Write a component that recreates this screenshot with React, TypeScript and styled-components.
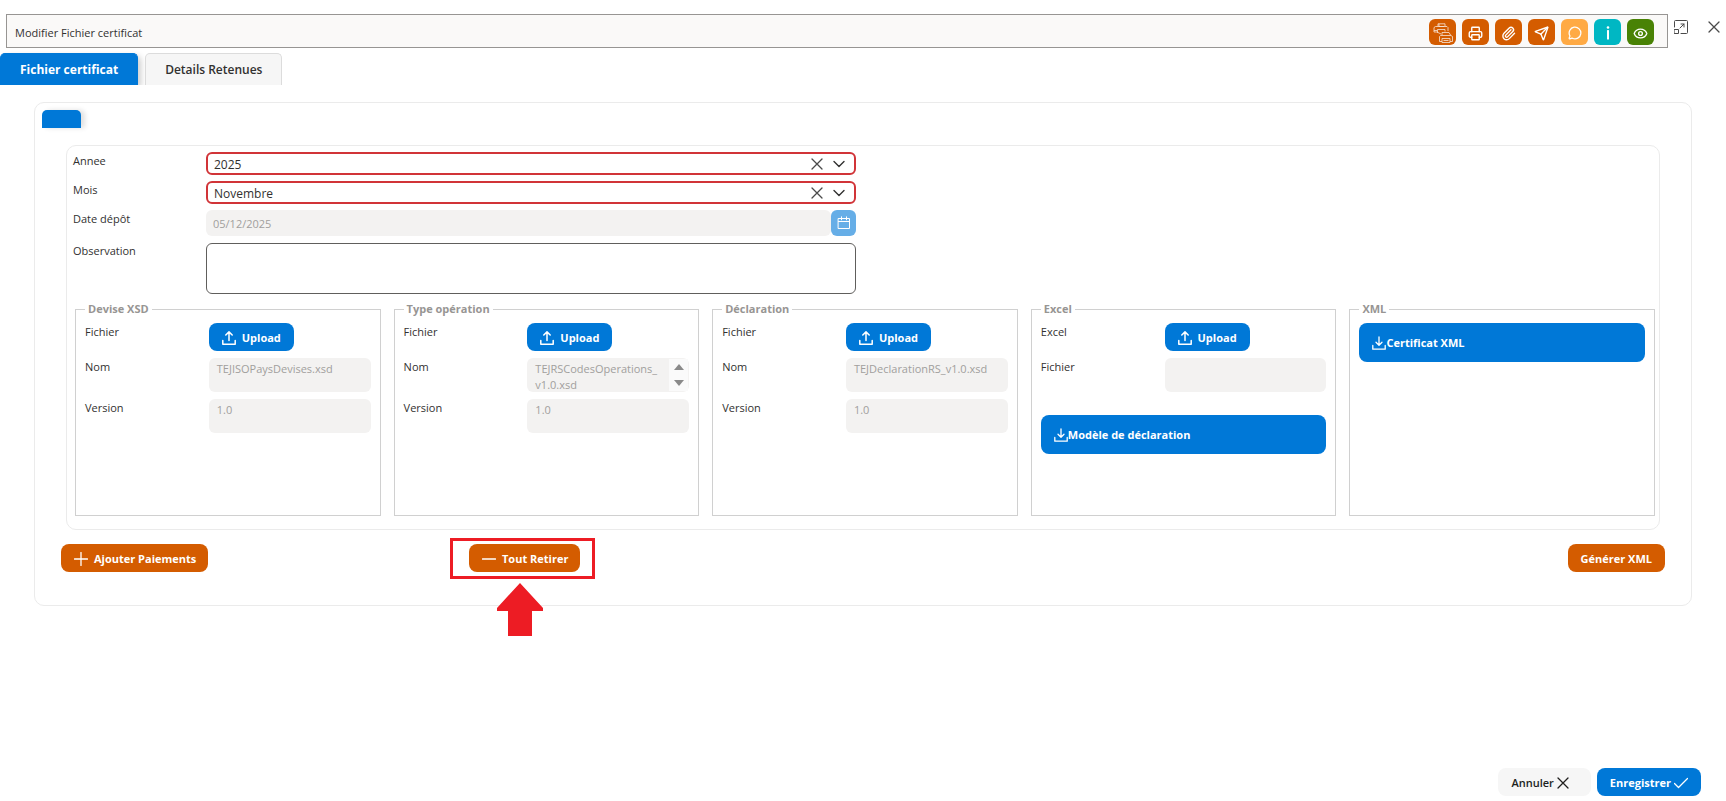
import React, { useId } from 'react';
import styled, { createGlobalStyle, css } from 'styled-components';
import { Eye, MessageCircle, Paperclip, Printer, Send } from 'lucide-react';

const blue = '#0078d7';
const orange = '#d45c00';
const red = '#ed1c24';

const GlobalStyle = createGlobalStyle`
  *, *::before, *::after { box-sizing: border-box; }
  body { margin: 0; background: #fff; }
  body, button, input, select, textarea {
    font-family: 'Open Sans', 'Noto Sans', sans-serif;
    font-size: 11px;
    line-height: 16px;
    color: #323130;
  }
`;

const Page = styled.form`
  min-height: 100vh;
  display: flex;
  flex-direction: column;
`;

const TopRow = styled.header`
  display: flex;
  align-items: flex-start;
  gap: 6px;
  padding: 14px 5px 0 6px;
`;

const TitleBar = styled.div`
  flex: 1;
  height: 34px;
  display: flex;
  align-items: center;
  justify-content: space-between;
  padding: 0 13px 0 8px;
  border: 1px solid #979593;
  background: #faf9f8;
`;

const Title = styled.h1`
  margin: 0;
  padding-top: 3px;
  font-size: 11px;
  font-weight: 400;
`;

const Toolbar = styled.div`
  display: flex;
  gap: 6px;
  padding-top: 2px;
`;

const ToolButton = styled.button<{ $color: string }>`
  width: 27px;
  height: 26px;
  display: grid;
  place-items: center;
  padding: 2px 0 0;
  border: 0;
  border-radius: 6px;
  background: ${(p) => p.$color};
  color: #fff;
`;

const WindowButtons = styled.div`
  display: flex;
  gap: 19px;
  padding-top: 5px;
`;

const WindowButton = styled.button`
  width: 14px;
  height: 15px;
  display: grid;
  place-items: center;
  padding: 0;
  border: 0;
  background: none;
  color: #4a4a4a;
`;

const Tabs = styled.nav`
  display: flex;
  gap: 7px;
  height: 37px;
  padding-top: 5px;
  overflow: hidden;
`;

const activeTab = css`
  background: ${blue};
  color: #fff;
  font-weight: 700;
  border-color: ${blue};
  box-shadow: 3px 3px 6px rgba(0, 0, 0, 0.2);
`;

const Tab = styled.button<{ $active?: boolean }>`
  padding: 0 19px;
  border: 1px solid #dcdcdc;
  border-bottom: 0;
  border-radius: 5px 5px 0 0;
  background: #f6f6f6;
  font-size: 12px;
  font-weight: 600;
  ${(p) => p.$active && activeTab}
`;

const Panel = styled.main`
  margin: 17px 34px 0;
  padding: 7px 26px 33px 7px;
  border: 1px solid #ebebeb;
  border-radius: 10px;
`;

const EmptyTab = styled.div`
  width: 39px;
  height: 18px;
  border-radius: 5px 5px 0 0;
  background: ${blue};
  box-shadow: 4px 0 5px rgba(0, 0, 0, 0.12);
`;

const Card = styled.section`
  margin: 17px 5px 0 24px;
  padding: 6px 4px 13px 8px;
  border: 1px solid #ebebeb;
  border-radius: 10px;
`;

const FormRows = styled.div`
  width: 50%;
  display: grid;
  gap: 6px;
  padding-right: 9px;
`;

const FormRow = styled.div`
  display: grid;
  grid-template-columns: 131px 1fr;
  align-items: start;
`;

const Label = styled.label`
  padding-top: 1px;
`;

const FormLabel = styled(Label)`
  margin-left: -2px;
`;

const SelectBox = styled.div`
  height: 23px;
  display: flex;
  align-items: center;
  gap: 10px;
  padding-right: 9px;
  border: 2px solid #d13438;
  border-radius: 6px;
`;

const Select = styled.select`
  flex: 1;
  height: 19px;
  padding: 3px 6px 0;
  border: 0;
  appearance: none;
  background: none;
  font-size: 12px;
`;

const ClearButton = styled.button`
  width: 12px;
  height: 12px;
  padding: 0;
  border: 0;
  background: none;
  color: #4a4a4a;
  display: grid;
`;

const DateField = styled.div`
  display: flex;
  height: 26px;
`;

const DateInput = styled.input`
  flex: 1;
  min-width: 0;
  padding: 1px 7px 0;
  border: 0;
  border-radius: 6px;
  background: #f3f2f1;
  color: #a19f9d;
`;

const DateButton = styled.button`
  width: 25px;
  display: grid;
  place-items: center;
  padding: 0;
  border: 0;
  border-radius: 6px;
  background: #66aee7;
  color: #fff;
`;

const Observation = styled.textarea`
  height: 51px;
  width: 100%;
  display: block;
  margin-top: 1px;
  border: 1px solid #605e5c;
  border-radius: 6px;
  resize: none;
`;

const Groups = styled.div`
  display: grid;
  grid-template-columns: repeat(5, 1fr);
  gap: 13px;
  margin-top: 7px;
`;

const Group = styled.fieldset`
  min-width: 0;
  height: 215px;
  display: flex;
  flex-direction: column;
  margin: 0;
  padding: 6px 9px 0;
  border: 1px solid #d0d0d0;
`;

const Legend = styled.legend`
  padding: 0 3px;
  color: #979593;
  font-weight: 700;
`;

const GroupRows = styled.div`
  display: grid;
  gap: 7px;
`;

const GroupRow = styled.div`
  display: grid;
  grid-template-columns: 13fr 17fr;
  align-items: start;
`;

const Button = styled.button<{ $color?: string; $text?: string }>`
  height: 28px;
  display: inline-flex;
  align-items: center;
  gap: 6px;
  padding: 1px 13px 0;
  border: 0;
  border-radius: 8px;
  background: ${(p) => p.$color ?? blue};
  color: ${(p) => p.$text ?? '#fff'};
  font-weight: 700;
  white-space: nowrap;
`;

const UploadButton = styled(Button)`
  justify-self: start;
`;

const ActionButton = styled(Button)`
  padding: 1px 12px 0 13px;
`;

const WideButton = styled(Button)<{ $spaced?: boolean }>`
  height: 39px;
  gap: 0;
  margin-top: ${(p) => (p.$spaced ? 23 : 0)}px;
`;

const ReadonlyWrap = styled.div`
  position: relative;
  height: 34px;
`;

const ReadonlyArea = styled.textarea<{ $scroll?: boolean }>`
  display: block;
  width: 100%;
  height: 34px;
  padding: 3px ${(p) => (p.$scroll ? 28 : 8)}px 0 8px;
  border: 0;
  border-radius: 6px;
  background: #f3f2f1;
  color: #a19f9d;
  resize: none;
  overflow: hidden;
  word-break: break-all;
`;

const ScrollTrack = styled.span`
  position: absolute;
  top: 1px;
  right: 1px;
  bottom: 1px;
  width: 19px;
  display: flex;
  flex-direction: column;
  align-items: center;
  justify-content: space-between;
  padding: 5px 0;
  background: #fafafa;
  color: #8a8a8a;
`;

const Actions = styled.div`
  display: grid;
  grid-template-columns: repeat(4, 1fr);
  gap: 28px;
  margin: 14px 0 0 19px;
  justify-items: start;

  & > :last-child {
    grid-column: 4;
    justify-self: end;
  }
`;

const Highlighted = styled.div`
  position: relative;
  display: flex;
`;

const HighlightFrame = styled.span`
  position: absolute;
  inset: -6px -15px -7px -19px;
  border: 3px solid ${red};
  pointer-events: none;
`;

const HighlightArrow = styled.svg`
  position: absolute;
  top: 39px;
  left: 28px;
`;

const Footer = styled.footer`
  display: flex;
  justify-content: flex-end;
  gap: 6px;
  margin-top: auto;
  padding: 20px 25px 5px;
`;

const FooterButton = styled(Button)`
  gap: 3px;
  padding: 1px 13px 0;
`;

const CancelButton = styled(FooterButton)`
  padding-right: 22px;
  font-weight: 600;
`;

type LineIconProps = { size?: number; box?: number; width?: number; d: string };

const LineIcon = ({ size = 14, box = 14, width = 1, d }: LineIconProps) => (
  <svg width={size} height={size} viewBox={`0 0 ${box} ${box}`} fill="none" stroke="currentColor" strokeWidth={width} strokeLinecap="round" strokeLinejoin="round" aria-hidden>
    <path d={d} />
  </svg>
);

const CrossIcon = () => <LineIcon size={12} box={12} width={1.3} d="M1 1l10 10M11 1L1 11" />;
const ChevronIcon = () => <LineIcon size={12} box={12} width={1.4} d="M1 3.5l5 5 5-5" />;
const UploadIcon = () => <LineIcon width={1.5} d="M7 9.5V1M3.8 4L7 .9 10.2 4M.8 9.5v3.7h12.4V9.5" />;
const DownloadIcon = () => <LineIcon width={1.3} d="M7 1v8M4 6.2L7 9.2l3-3M.8 9.5v3.7h12.4V9.5" />;
const CalendarIcon = () => <LineIcon width={1} d="M1.5 2.5h11v10h-11zM1.5 5.5h11M4.5 .8v3M9.5 .8v3" />;

const PrintersIcon = () => (
  <svg width="20" height="20" viewBox="0 0 20 20" fill="none" stroke="#fff" strokeWidth="0.8" opacity="0.85" aria-hidden>
    <path d="M5 3.5V.8h7v2.7M4.500 9H1V4.500l1.500-1h11.500l1 1V8M4.500 6.500h7.500v2M4.500 6.500V10M1 7.500h3M6 .8v2.700h5" />
    <path d="M9 12V9.500h7l1.500 2.500M6.500 18.500V13.500l1-1H18l1.500 1v5M9 15.500h8v4H9zM6.500 18.500H9M17 18.500h2.500M10.500 17.500h5M5 9.500l3 1.500" />
  </svg>
);

const InfoIcon = () => (
  <svg width="4" height="14" viewBox="0 0 4 14" fill="#fff" aria-hidden>
    <circle cx="2" cy="1.5" r="1.3" />
    <rect x="1" y="4" width="2" height="9.5" rx="0.5" />
  </svg>
);

const ExpandIcon = () => (
  <LineIcon width={1} d="M.5 7V1.500q0-1 1-1h11q1 0 1 1v11q0 1-1 1H7M.5 9.500h4v4h-4zM6 8l4-4M7 4h3v3" />
);

const tools = [
  { name: 'Imprimer tout', color: orange, icon: <PrintersIcon /> },
  { name: 'Imprimer', color: orange, icon: <Printer size={15} strokeWidth={2.2} /> },
  { name: 'Pièces jointes', color: orange, icon: <Paperclip size={15} strokeWidth={2.2} /> },
  { name: 'Envoyer', color: orange, icon: <Send size={15} strokeWidth={2.2} /> },
  { name: 'Commentaires', color: '#ffaa44', icon: <MessageCircle size={14} strokeWidth={2.2} /> },
  { name: 'Informations', color: '#00b7c3', icon: <InfoIcon /> },
  { name: 'Aperçu', color: '#498205', icon: <Eye size={15} strokeWidth={2.2} /> },
];

const SelectField = ({ label, value }: { label: string; value: string }) => {
  const id = useId();
  return (
    <FormRow>
      <FormLabel htmlFor={id}>{label}</FormLabel>
      <SelectBox>
        <Select id={id} defaultValue={value}>
          <option>{value}</option>
        </Select>
        <ClearButton type="button" aria-label={`Effacer ${label}`}><CrossIcon /></ClearButton>
        <ChevronIcon />
      </SelectBox>
    </FormRow>
  );
};

const UploadRow = ({ label }: { label: string }) => {
  const id = useId();
  return (
    <GroupRow>
      <Label htmlFor={id}>{label}</Label>
      <UploadButton id={id} type="button"><UploadIcon />Upload</UploadButton>
    </GroupRow>
  );
};

const ReadonlyRow = ({ label, value, scroll }: { label: string; value: string; scroll?: boolean }) => {
  const id = useId();
  return (
    <GroupRow>
      <Label htmlFor={id}>{label}</Label>
      <ReadonlyWrap>
        <ReadonlyArea id={id} readOnly value={value} $scroll={scroll} />
        {scroll && (
          <ScrollTrack aria-hidden>
            <svg width="10" height="6" fill="currentColor"><path d="M0 6L5 0l5 6z" /></svg>
            <svg width="10" height="6" fill="currentColor"><path d="M0 0h10L5 6z" /></svg>
          </ScrollTrack>
        )}
      </ReadonlyWrap>
    </GroupRow>
  );
};

const schemas = [
  { title: 'Devise XSD', file: 'TEJISOPaysDevises.xsd' },
  { title: 'Type opération', file: 'TEJRSCodesOperations_v1.0.xsd', scroll: true },
  { title: 'Déclaration', file: 'TEJDeclarationRS_v1.0.xsd' },
];

export default function App() {
  return (
    <Page onSubmit={(e) => e.preventDefault()}>
      <GlobalStyle />
      <TopRow>
        <TitleBar>
          <Title>Modifier Fichier certificat</Title>
          <Toolbar>
            {tools.map((t) => (
              <ToolButton key={t.name} type="button" aria-label={t.name} $color={t.color}>{t.icon}</ToolButton>
            ))}
          </Toolbar>
        </TitleBar>
        <WindowButtons>
          <WindowButton type="button" aria-label="Agrandir"><ExpandIcon /></WindowButton>
          <WindowButton type="button" aria-label="Fermer"><CrossIcon /></WindowButton>
        </WindowButtons>
      </TopRow>

      <Tabs>
        <Tab type="button" $active>Fichier certificat</Tab>
        <Tab type="button">Details Retenues</Tab>
      </Tabs>

      <Panel>
        <EmptyTab />
        <Card>
          <FormRows>
            <SelectField label="Annee" value="2025" />
            <SelectField label="Mois" value="Novembre" />
            <FormRow>
              <FormLabel htmlFor="date-depot">Date dépôt</FormLabel>
              <DateField>
                <DateInput id="date-depot" readOnly value="05/12/2025" />
                <DateButton type="button" aria-label="Choisir une date"><CalendarIcon /></DateButton>
              </DateField>
            </FormRow>
            <FormRow>
              <FormLabel htmlFor="observation">Observation</FormLabel>
              <Observation id="observation" />
            </FormRow>
          </FormRows>

          <Groups>
            {schemas.map((s) => (
              <Group key={s.title}>
                <Legend>{s.title}</Legend>
                <GroupRows>
                  <UploadRow label="Fichier" />
                  <ReadonlyRow label="Nom" value={s.file} scroll={s.scroll} />
                  <ReadonlyRow label="Version" value="1.0" />
                </GroupRows>
              </Group>
            ))}
            <Group>
              <Legend>Excel</Legend>
              <GroupRows>
                <UploadRow label="Excel" />
                <ReadonlyRow label="Fichier" value="" />
              </GroupRows>
              <WideButton type="button" $spaced><DownloadIcon />Modèle de déclaration</WideButton>
            </Group>
            <Group>
              <Legend>XML</Legend>
              <WideButton type="button"><DownloadIcon />Certificat XML</WideButton>
            </Group>
          </Groups>
        </Card>

        <Actions>
          <ActionButton type="button" $color={orange}>
            <LineIcon width={1.3} d="M7 .5v13M.5 7h13" />Ajouter Paiements
          </ActionButton>
          <Highlighted>
            <ActionButton type="button" $color={orange}>
              <LineIcon width={1.3} d="M.5 7h13" />Tout Retirer
            </ActionButton>
            <HighlightFrame />
            <HighlightArrow width="46" height="53" viewBox="0 0 46 53" fill={red} aria-hidden>
              <path d="M23 0l23 25v3H35v25H11V28H0v-3z" />
            </HighlightArrow>
          </Highlighted>
          <Button type="button" $color={orange}>Générer XML</Button>
        </Actions>
      </Panel>

      <Footer>
        <CancelButton type="button" $color="#f6f6f6" $text="#201f1e">Annuler<CrossIcon /></CancelButton>
        <FooterButton type="submit">Enregistrer<LineIcon width={1.3} d="M.5 7.5l4 4 9-9" /></FooterButton>
      </Footer>
    </Page>
  );
}
